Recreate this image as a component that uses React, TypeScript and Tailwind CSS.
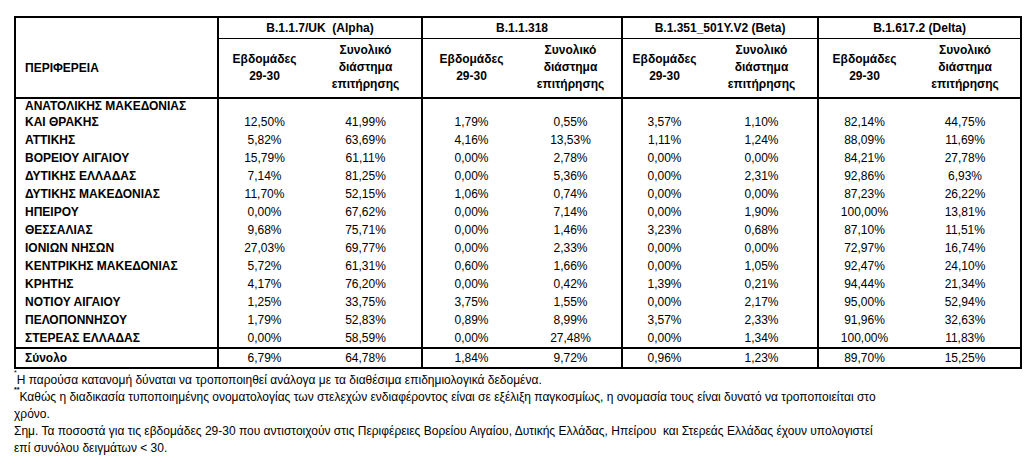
const groups = ['B.1.1.7/UK\u00a0 (Alpha)', 'B.1.1.318', 'B.1.351_501Y.V2 (Beta)', 'B.1.617.2 (Delta)'];

const rows: string[][] = [
  ['ΑΤΤΙΚΗΣ', '5,82%', '63,69%', '4,16%', '13,53%', '1,11%', '1,24%', '88,09%', '11,69%'],
  ['ΒΟΡΕΙΟΥ ΑΙΓΑΙΟΥ', '15,79%', '61,11%', '0,00%', '2,78%', '0,00%', '0,00%', '84,21%', '27,78%'],
  ['ΔΥΤΙΚΗΣ ΕΛΛΑΔΑΣ', '7,14%', '81,25%', '0,00%', '5,36%', '0,00%', '2,31%', '92,86%', '6,93%'],
  ['ΔΥΤΙΚΗΣ ΜΑΚΕΔΟΝΙΑΣ', '11,70%', '52,15%', '1,06%', '0,74%', '0,00%', '0,00%', '87,23%', '26,22%'],
  ['ΗΠΕΙΡΟΥ', '0,00%', '67,62%', '0,00%', '7,14%', '0,00%', '1,90%', '100,00%', '13,81%'],
  ['ΘΕΣΣΑΛΙΑΣ', '9,68%', '75,71%', '0,00%', '1,46%', '3,23%', '0,68%', '87,10%', '11,51%'],
  ['ΙΟΝΙΩΝ ΝΗΣΩΝ', '27,03%', '69,77%', '0,00%', '2,33%', '0,00%', '0,00%', '72,97%', '16,74%'],
  ['ΚΕΝΤΡΙΚΗΣ ΜΑΚΕΔΟΝΙΑΣ', '5,72%', '61,31%', '0,60%', '1,66%', '0,00%', '1,05%', '92,47%', '24,10%'],
  ['ΚΡΗΤΗΣ', '4,17%', '76,20%', '0,00%', '0,42%', '1,39%', '0,21%', '94,44%', '21,34%'],
  ['ΝΟΤΙΟΥ ΑΙΓΑΙΟΥ', '1,25%', '33,75%', '3,75%', '1,55%', '0,00%', '2,17%', '95,00%', '52,94%'],
  ['ΠΕΛΟΠΟΝΝΗΣΟΥ', '1,79%', '52,83%', '0,89%', '8,99%', '3,57%', '2,33%', '91,96%', '32,63%'],
  ['ΣΤΕΡΕΑΣ ΕΛΛΑΔΑΣ', '0,00%', '58,59%', '0,00%', '27,48%', '0,00%', '1,34%', '100,00%', '11,83%'],
];

const firstRow = ['12,50%', '41,99%', '1,79%', '0,55%', '3,57%', '1,10%', '82,14%', '44,75%'];
const total = ['6,79%', '64,78%', '1,84%', '9,72%', '0,96%', '1,23%', '89,70%', '15,25%'];

// value cell: thick line on the right of every second column (group edge)
function valueClass(i: number) {
  return i % 2 === 1 && i < 7 ? 'text-center border-r-2 border-black' : 'text-center';
}

export default function App() {
  return (
    <div className="w-[1033px] h-[473px] bg-white pt-4 pl-[14px] text-black text-[12px] font-['Liberation_Sans',Arial,sans-serif]">
      <table className="table-fixed border-collapse w-[1006px] border-2 border-black">
        <colgroup>
          <col className="w-[203px]" />
          <col className="w-[92px]" />
          <col className="w-[112px]" />
          <col className="w-[98px]" />
          <col className="w-[102px]" />
          <col className="w-[84px]" />
          <col className="w-[112px]" />
          <col className="w-[92px]" />
          <col className="w-[111px]" />
        </colgroup>
        <thead>
          <tr className="h-[21px]">
            <th
              rowSpan={2}
              className="border-r-2 border-b-2 border-black text-left align-top pl-[9px] pt-[43px] leading-[14px] font-bold"
            >
              ΠΕΡΙΦΕΡΕΙΑ
            </th>
            {groups.map((g) => (
              <th key={g} colSpan={2} className="border-r-2 border-b border-black text-center font-bold leading-[14px]">
                {g}
              </th>
            ))}
          </tr>
          <tr className="h-[60px]">
            {groups.map((g, gi) => [
              <th key={g + 'a'} className="border-b-2 border-black text-center align-middle font-bold leading-[17px]">
                Εβδομάδες
                <br />
                29-30
              </th>,
              <th
                key={g + 'b'}
                className={
                  'border-b-2 border-black text-center align-middle font-bold leading-[17px]' +
                  (gi < 3 ? ' border-r-2' : '')
                }
              >
                Συνολικό
                <br />
                διάστημα
                <br />
                επιτήρησης
              </th>,
            ])}
          </tr>
        </thead>
        <tbody>
          <tr className="h-[32px]">
            <td className="border-r-2 border-black text-left align-bottom pl-[9px] font-bold whitespace-nowrap">
              <div className="leading-[14px]">ΑΝΑΤΟΛΙΚΗΣ ΜΑΚΕΔΟΝΙΑΣ</div>
              <div className="leading-[18px]">ΚΑΙ ΘΡΑΚΗΣ</div>
            </td>
            {firstRow.map((v, i) => (
              <td key={i} className={valueClass(i) + ' align-bottom leading-[18px]'}>
                {v}
              </td>
            ))}
          </tr>
          {rows.map((r) => (
            <tr key={r[0]} className="h-[18px]">
              <td className="border-r-2 border-black text-left pl-[9px] font-bold leading-[18px] whitespace-nowrap">
                {r[0]}
              </td>
              {r.slice(1).map((v, i) => (
                <td key={i} className={valueClass(i) + ' leading-[18px]'}>
                  {v}
                </td>
              ))}
            </tr>
          ))}
          <tr className="h-[20px] border-t-2 border-black">
            <td className="border-r-2 border-black text-left pl-[9px] font-bold leading-[18px]">Σύνολο</td>
            {total.map((v, i) => (
              <td key={i} className={valueClass(i) + ' leading-[18px]'}>
                {v}
              </td>
            ))}
          </tr>
        </tbody>
      </table>

      <div className="mt-[3px] leading-[17px] whitespace-nowrap">
        <div>
          <sup className="text-[7px] align-top leading-none">*</sup>Η παρούσα κατανομή δύναται να τροποποιηθεί ανάλογα με
          τα διαθέσιμα επιδημιολογικά δεδομένα.
        </div>
        <div>
          <sup className="text-[7px] align-top leading-none font-bold">**</sup>Καθώς η διαδικασία τυποποιημένης
          ονοματολογίας των στελεχών ενδιαφέροντος είναι σε εξέλιξη παγκοσμίως, η ονομασία τους είναι δυνατό να
          τροποποιείται στο
        </div>
        <div>χρόνο.</div>
        <div>
          Σημ. Τα ποσοστά για τις εβδομάδες 29-30 που αντιστοιχούν στις Περιφέρειες Βορείου Αιγαίου, Δυτικής Ελλάδας,
          Ηπείρου&nbsp; και Στερεάς Ελλάδας έχουν υπολογιστεί
        </div>
        <div>επί συνόλου δειγμάτων &lt; 30.</div>
      </div>
    </div>
  );
}
